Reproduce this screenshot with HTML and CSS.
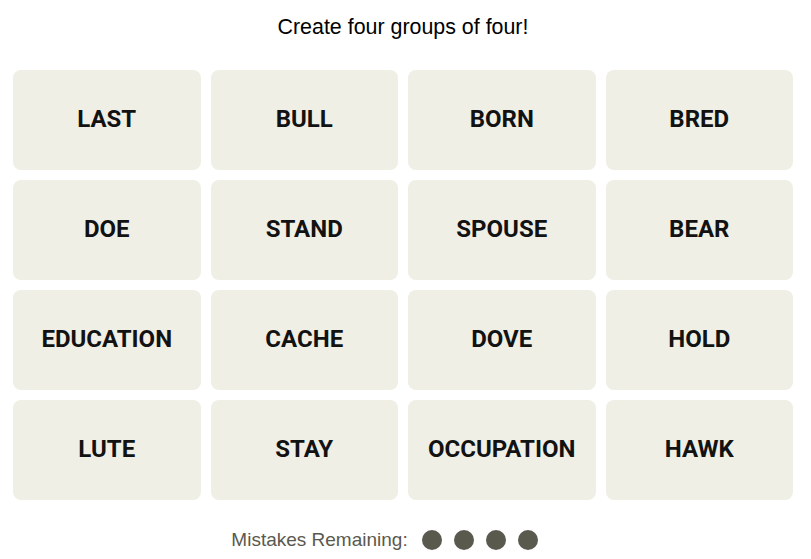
FILE: index.html
```html
<!DOCTYPE html>
<html lang="en">
<head>
  <meta charset="utf-8">
  <meta name="viewport" content="width=device-width, initial-scale=1.0">
  <title>Connections</title>
  <link rel="stylesheet" href="styles.css">
</head>
<body>
  <div class="game">
    <h2 class="prompt">Create four groups of four!</h2>

    <!-- Word tiles -->
    <div class="board">
      <button class="tile">LAST</button>
      <button class="tile">BULL</button>
      <button class="tile">BORN</button>
      <button class="tile">BRED</button>
      <button class="tile">DOE</button>
      <button class="tile">STAND</button>
      <button class="tile">SPOUSE</button>
      <button class="tile">BEAR</button>
      <button class="tile">EDUCATION</button>
      <button class="tile">CACHE</button>
      <button class="tile">DOVE</button>
      <button class="tile">HOLD</button>
      <button class="tile">LUTE</button>
      <button class="tile">STAY</button>
      <button class="tile">OCCUPATION</button>
      <button class="tile">HAWK</button>
    </div>

    <!-- Mistakes counter -->
    <div class="mistakes">
      <span class="mistakes-label">Mistakes Remaining:</span>
      <span class="dots">
        <span class="dot"></span>
        <span class="dot"></span>
        <span class="dot"></span>
        <span class="dot"></span>
      </span>
    </div>
  </div>
</body>
</html>
```

FILE: styles.css
```css
body {
  margin: 0;
  background-color: #fff;
  color: #121212;
  font-family: "Liberation Sans", Arial, sans-serif;
}

.game {
  width: 780px;
  margin-left: 13px;
}

.prompt {
  margin: 0;
  padding-top: 14px;
  font-size: 21.4px;
  font-weight: normal;
  line-height: 26px;
  text-align: center;
  color: #000;
}

.board {
  margin-top: 30px;
  display: grid;
  grid-template-columns: repeat(4, 1fr);
  grid-auto-rows: 100px;
  gap: 10px;
}

.tile {
  border: none;
  border-radius: 8px;
  background-color: #efefe6;
  color: #121212;
  font-family: Roboto, "Liberation Sans", sans-serif;
  font-weight: bold;
  font-size: 24px;
  cursor: pointer;
  padding: 0 0 2px;
}

.mistakes {
  display: flex;
  justify-content: center;
  align-items: center;
  gap: 14px;
  margin-top: 29px;
  padding-right: 37px;
}

.mistakes-label {
  font-size: 19px;
  color: #5a594e;
}

.dots {
  display: flex;
  gap: 12px;
}

.dot {
  width: 20px;
  height: 20px;
  border-radius: 50%;
  background-color: #5a594e;
}
```
